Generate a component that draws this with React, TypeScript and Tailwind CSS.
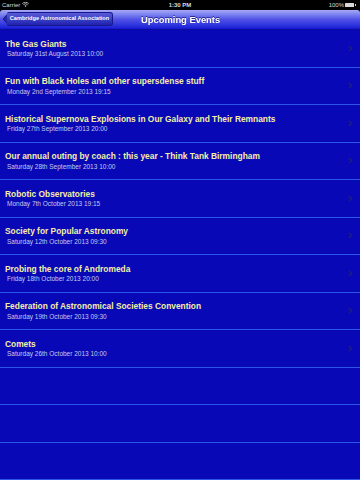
import React from "react";

const events: [string, string][] = [
  ["The Gas Giants", "Saturday 31st August 2013 10:00"],
  ["Fun with Black Holes and other supersdense stuff", "Monday 2nd September 2013 19:15"],
  ["Historical Supernova Explosions in Our Galaxy and Their Remnants", "Friday 27th September 2013 20:00"],
  ["Our annual outing by coach : this year - Think Tank Birmingham", "Saturday 28th September 2013 10:00"],
  ["Robotic Observatories", "Monday 7th October 2013 19:15"],
  ["Society for Popular Astronomy", "Saturday 12th October 2013 09:30"],
  ["Probing the core of Andromeda", "Friday 18th October 2013 20:00"],
  ["Federation of Astronomical Societies Convention", "Saturday 19th October 2013 09:30"],
  ["Comets", "Saturday 26th October 2013 10:00"],
];

function Chevron() {
  return (
    <svg width="5" height="7" viewBox="0 0 5 7" className="shrink-0 mr-[2px]">
      <path d="M1 1 L3.8 3.5 L1 6" fill="none" stroke="#20207a" strokeWidth="1.3" />
    </svg>
  );
}

export default function App() {
  return (
    <div
      className="w-[360px] h-[480px] overflow-hidden bg-black flex flex-col"
      style={{ fontFamily: '"Liberation Sans", Arial, sans-serif' }}
    >
      {/* status bar */}
      <div className="h-[9.5px] flex items-center justify-between px-[2px] text-[6px] leading-none text-[#d8d8d8] relative">
        <div className="flex items-center gap-[2px]">
          <span>Carrier</span>
          <svg width="7" height="5" viewBox="0 0 7 5">
            <path d="M0.3 1.6 A4.5 4.5 0 0 1 6.7 1.6" fill="none" stroke="#d8d8d8" strokeWidth="0.8" />
            <path d="M1.4 2.7 A3 3 0 0 1 5.6 2.7" fill="none" stroke="#d8d8d8" strokeWidth="0.8" />
            <path d="M2.5 3.8 L3.5 4.9 L4.5 3.8 A1.5 1.5 0 0 0 2.5 3.8 Z" fill="#d8d8d8" />
          </svg>
        </div>
        <span className="absolute left-1/2 -translate-x-1/2 font-bold">1:30 PM</span>
        <div className="flex items-center gap-[1px] pr-[2px]">
          <span>100%</span>
          <div className="w-[9px] h-[4px] bg-[#d8d8d8] rounded-[0.5px]" />
          <div className="w-[1px] h-[2px] bg-[#d8d8d8]" />
        </div>
      </div>
      {/* nav bar */}
      <div className="h-[20.5px] rounded-t-[3px] bg-gradient-to-b from-[#a8a8f4] via-[#5050e6] to-[#1616d4] flex items-center relative border-b border-[#0c0c9c]">
        <div className="ml-[4px] relative flex items-center h-[14px]">
          <div className="absolute left-[0px] top-[2px] w-[10px] h-[10px] rotate-45 rounded-[2px] bg-[#2626aa] border-l border-b border-[#1a1a80]" />
          <div className="relative ml-[3px] h-[14px] w-[106px] rounded-r-[3px] rounded-l-[2px] bg-gradient-to-b from-[#5a5ad8] to-[#2020b0] border-y border-r border-[#18188a] flex items-center justify-center text-white font-bold text-[5.6px] leading-none">
            Cambridge Astronomical Association
          </div>
        </div>
        <span className="absolute left-[141px] text-white font-bold text-[9.4px] leading-none drop-shadow-[0_-0.5px_0_rgba(0,0,80,0.6)]">
          Upcoming Events
        </span>
      </div>
      {/* list */}
      <div className="flex-1 bg-[#0808b6] flex flex-col">
        {Array.from({ length: 12 }).map((_, i) => {
          const ev = events[i];
          return (
            <div
              key={i}
              className="h-[37.5px] shrink-0 border-b border-[#2c56e8] flex items-center pl-[5px] pr-[5px]"
            >
              <div className="flex-1 flex flex-col gap-[1.5px] min-w-0">
                {ev && (
                  <>
                    <span className="text-[8.4px] leading-[9px] font-bold text-[#f4eea8] whitespace-nowrap">
                      {ev[0]}
                    </span>
                    <span className="pl-[2px] text-[6.5px] leading-[7px] text-[#c8c8ec] whitespace-nowrap">
                      {ev[1]}
                    </span>
                  </>
                )}
              </div>
              {ev && <Chevron />}
            </div>
          );
        })}
      </div>
    </div>
  );
}
